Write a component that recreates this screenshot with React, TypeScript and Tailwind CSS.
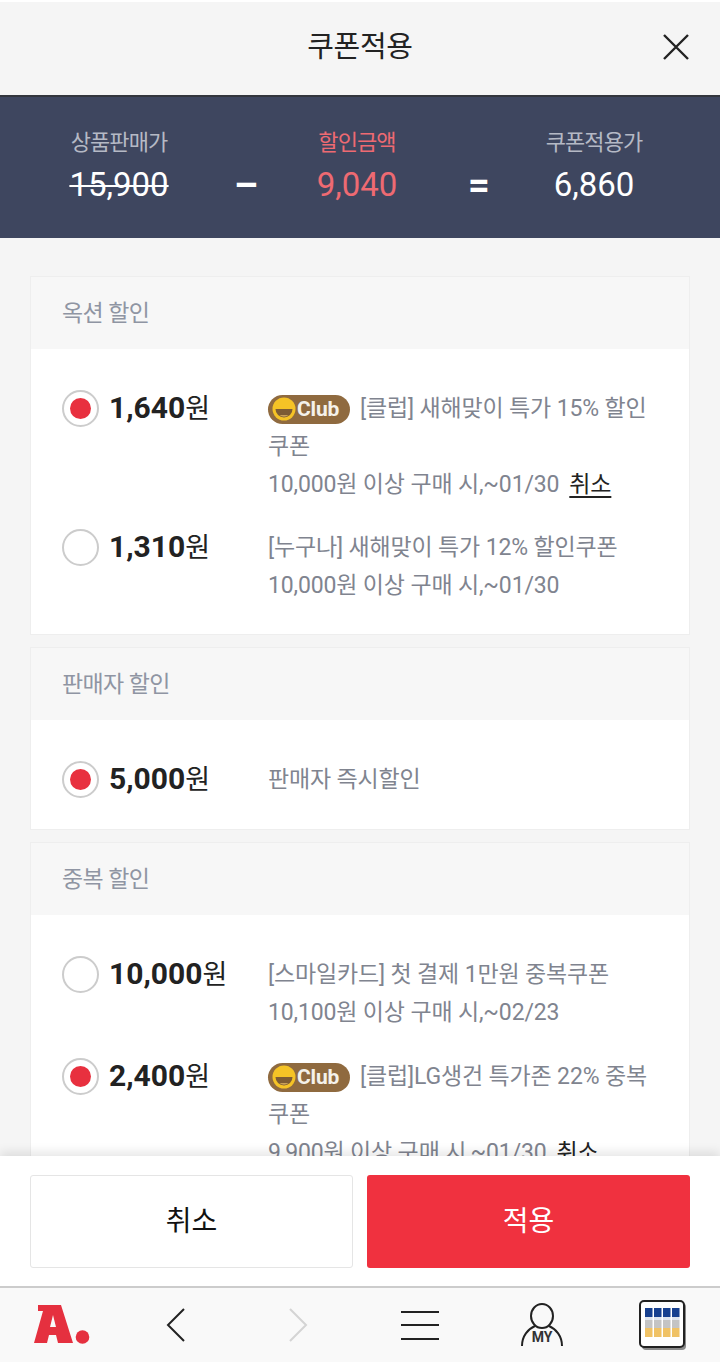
import React from "react";

const font = "font-['Roboto','Noto_Sans_CJK_KR',sans-serif]";

const Radio: React.FC<{ checked?: boolean }> = ({ checked }) => (
  <span className="flex h-[37px] w-[37px] flex-shrink-0 items-center justify-center rounded-full border-2 border-[#cccccc] bg-white">
    {checked && <span className="h-[21px] w-[21px] rounded-full bg-[#e8303f]" />}
  </span>
);

const ClubBadge: React.FC = () => (
  <span className="mr-[10px] inline-flex h-[29px] w-[82px] items-center rounded-full bg-[#8f6a3f] pl-[4px] align-[-5px]">
    <svg width="24" height="24" viewBox="0 0 24 24">
      <circle cx="12" cy="12" r="11.5" fill="#f5c326" />
      <path d="M3.5 12h17a8.5 8.5 0 0 1-17 0z" fill="#7d5c34" />
      <path d="M7.5 18h9a6.5 6.5 0 0 1-9 0z" fill="#c9a25a" />
    </svg>
    <span className="ml-[1px] text-[21px] leading-none font-bold tracking-[-0.2px] text-[#f4f1ea]">Club</span>
  </span>
);

const Item: React.FC<{
  checked?: boolean;
  amount: string;
  children: React.ReactNode;
  className?: string;
}> = ({ checked, amount, children, className }) => (
  <div className={`flex ${className ?? ""}`}>
    <div className="flex h-[38px] w-[206px] flex-shrink-0 items-center">
      <Radio checked={checked} />
      <span className="ml-[10px] pb-[2px] text-[30px] font-bold text-[#222222]">
        {amount}
        <span className="text-[27px] font-normal">원</span>
      </span>
    </div>
    <div className="w-[392px] pt-[1px] text-[23px] leading-[38px] tracking-[-0.15px] text-[#80848f]">{children}</div>
  </div>
);

const Section: React.FC<{
  title: string;
  children: React.ReactNode;
  className?: string;
  bodyClassName?: string;
}> = ({ title, children, className, bodyClassName }) => (
  <section className={`border border-[#eeeeee] bg-white ${className ?? ""}`}>
    <div className="flex h-[72px] items-center bg-[#f7f7f7] pt-[2px] pl-[31px] text-[23px] tracking-[-0.6px] text-[#8f95a3]">
      {title}
    </div>
    <div className={bodyClassName ?? "pt-[40px] pb-[29px] pl-[31px]"}>{children}</div>
  </section>
);

const Cans: React.FC = () => (
  <svg width="48" height="50" viewBox="0 0 48 50">
    <rect x="3" y="3" width="44" height="47" rx="4" fill="#8a8a8a" />
    <rect x="1" y="1" width="44" height="46" rx="4" fill="#ffffff" stroke="#222222" strokeWidth="2" />
    {[6, 15, 24, 33].map((x) => (
      <g key={x}>
        <rect x={x} y="8" width="7.5" height="9" fill="#17408f" />
        <rect x={x} y="17" width="7.5" height="3" fill="#dfe5ee" />
        <rect x={x} y="20" width="7.5" height="8" fill="#c4c4c4" />
        <rect x={x} y="28" width="7.5" height="9" fill="#f0c265" />
      </g>
    ))}
  </svg>
);

const Summary: React.FC<{ label: string; value: string; className: string; labelColor: string; valueColor: string; strike?: boolean }> = ({
  label,
  value,
  className,
  labelColor,
  valueColor,
  strike,
}) => (
  <div className={`text-center ${className}`}>
    <p className={`text-[22px] leading-[32px] tracking-[-0.9px] ${labelColor}`}>{label}</p>
    <p className={`mt-[6px] text-[33px] leading-[40px] ${valueColor} ${strike ? "line-through decoration-2" : ""}`}>{value}</p>
  </div>
);

export default function App() {
  return (
    <div className={`flex h-[1362px] w-[720px] flex-col overflow-hidden bg-[#f5f5f5] ${font}`}>
      {/* Title */}
      <header className="relative flex h-[97px] flex-shrink-0 items-center justify-center border-t-2 border-b-2 border-t-white border-b-[#33363d] pb-[2px]">
        <h1 className="text-[29px] font-normal tracking-[-0.3px] text-[#222222]">쿠폰적용</h1>
        <button className="absolute top-[31px] right-[30px]">
          <svg width="28" height="28" viewBox="0 0 28 28" fill="none" stroke="#222222" strokeWidth="2.4">
            <path d="M2 2l24 24M26 2L2 26" />
          </svg>
        </button>
      </header>

      {/* Price summary */}
      <div className="flex h-[141px] flex-shrink-0 items-center bg-[#3e465f] pb-[3px]">
        <Summary label="상품판매가" value="15,900" className="w-[238px]" labelColor="text-[#b5b9c5]" valueColor="text-white" strike />
        <span className="mt-[37px] -ml-[4px] mr-[3px] w-[20px] text-center text-[38px] leading-[40px] font-bold text-white">–</span>
        <Summary label="할인금액" value="9,040" className="w-[200px]" labelColor="text-[#ee6a72]" valueColor="text-[#ee6a72]" />
        <span className="mt-[37px] ml-[11px] w-[20px] text-center text-[38px] leading-[40px] font-bold text-white">=</span>
        <Summary label="쿠폰적용가" value="6,860" className="w-[212px]" labelColor="text-[#b5b9c5]" valueColor="text-white" />
      </div>

      {/* Coupons */}
      <main className="min-h-0 flex-1 overflow-hidden px-[30px] pt-[38px]">
        <Section title="옥션 할인">
          <Item checked amount="1,640">
            <ClubBadge />
            [클럽] 새해맞이 특가 15% 할인
            <br />
            쿠폰
            <br />
            10,000원 이상 구매 시,~01/30
            <a className="ml-[10px] text-[#222222] underline underline-offset-4">취소</a>
          </Item>
          <Item amount="1,310" className="mt-[24px]">
            [누구나] 새해맞이 특가 12% 할인쿠폰
            <br />
            10,000원 이상 구매 시,~01/30
          </Item>
        </Section>
        <Section title="판매자 할인" className="mt-[12px]" bodyClassName="pt-[40px] pb-[30px] pl-[31px]">
          <Item checked amount="5,000">
            판매자 즉시할인
          </Item>
        </Section>
        <Section title="중복 할인" className="mt-[12px]" bodyClassName="pt-[40px] pb-[30px] pl-[31px]">
          <Item amount="10,000">
            [스마일카드] 첫 결제 1만원 중복쿠폰
            <br />
            10,100원 이상 구매 시,~02/23
          </Item>
          <Item checked amount="2,400" className="mt-[25px]">
            <ClubBadge />
            [클럽]LG생건 특가존 22% 중복
            <br />
            쿠폰
            <br />
            9,900원 이상 구매 시,~01/30
            <a className="ml-[10px] text-[#222222] underline underline-offset-4">취소</a>
          </Item>
        </Section>
      </main>

      {/* Actions */}
      <div className="relative flex h-[130px] flex-shrink-0 gap-[14px] bg-white px-[30px] pt-[19px] shadow-[0_-4px_10px_rgba(0,0,0,0.1)]">
        <button className="h-[93px] w-[323px] rounded-[3px] border border-[#e5e5e5] bg-white text-[28px] text-[#111111]">
          취소
        </button>
        <button className="h-[93px] w-[323px] rounded-[3px] bg-[#f0313f] text-[28px] text-white">적용</button>
      </div>

      {/* Browser toolbar */}
      <nav className="relative flex h-[76px] flex-shrink-0 items-center border-t-2 border-[#cccccc] bg-[#f9f9f9]">
        <span className="ml-[34px] flex">
          <svg width="56" height="40" viewBox="0 0 56 40">
            <path d="M4 0H27L39 38H24L22 30H15L13 38H0L9 6H4ZM19 10L16 22H22Z" fill="#e5303f" fillRule="evenodd" />
            <circle cx="48.5" cy="32" r="6.8" fill="#e5303f" />
          </svg>
        </span>
        <svg className="ml-[76px]" width="20" height="36" viewBox="0 0 20 36" fill="none" stroke="#222222" strokeWidth="2">
          <path d="M18 2L2 18l16 16" />
        </svg>
        <svg className="ml-[102px]" width="20" height="36" viewBox="0 0 20 36" fill="none" stroke="#d4d4d4" strokeWidth="2">
          <path d="M2 2l16 16L2 34" />
        </svg>
        <span className="ml-[93px] flex h-[29px] w-[38px] flex-col justify-between">
          <span className="h-[2px] bg-[#222222]" />
          <span className="h-[2px] bg-[#222222]" />
          <span className="h-[2px] bg-[#222222]" />
        </span>
        <span className="relative ml-[82px] flex h-[44px] w-[42px]">
          <svg width="42" height="44" viewBox="0 0 42 44" fill="none" stroke="#222222" strokeWidth="2">
            <ellipse cx="21" cy="13" rx="11" ry="12" />
            <path d="M1 43c0-10 6-17 13-20M41 43c0-10-6-17-13-20" />
          </svg>
          <span className="absolute top-[25px] left-0 w-full text-center text-[14px] leading-[18px] font-bold text-[#333333]">
            MY
          </span>
        </span>
        <span className="ml-[76px] flex">
          <Cans />
        </span>
      </nav>
    </div>
  );
}
